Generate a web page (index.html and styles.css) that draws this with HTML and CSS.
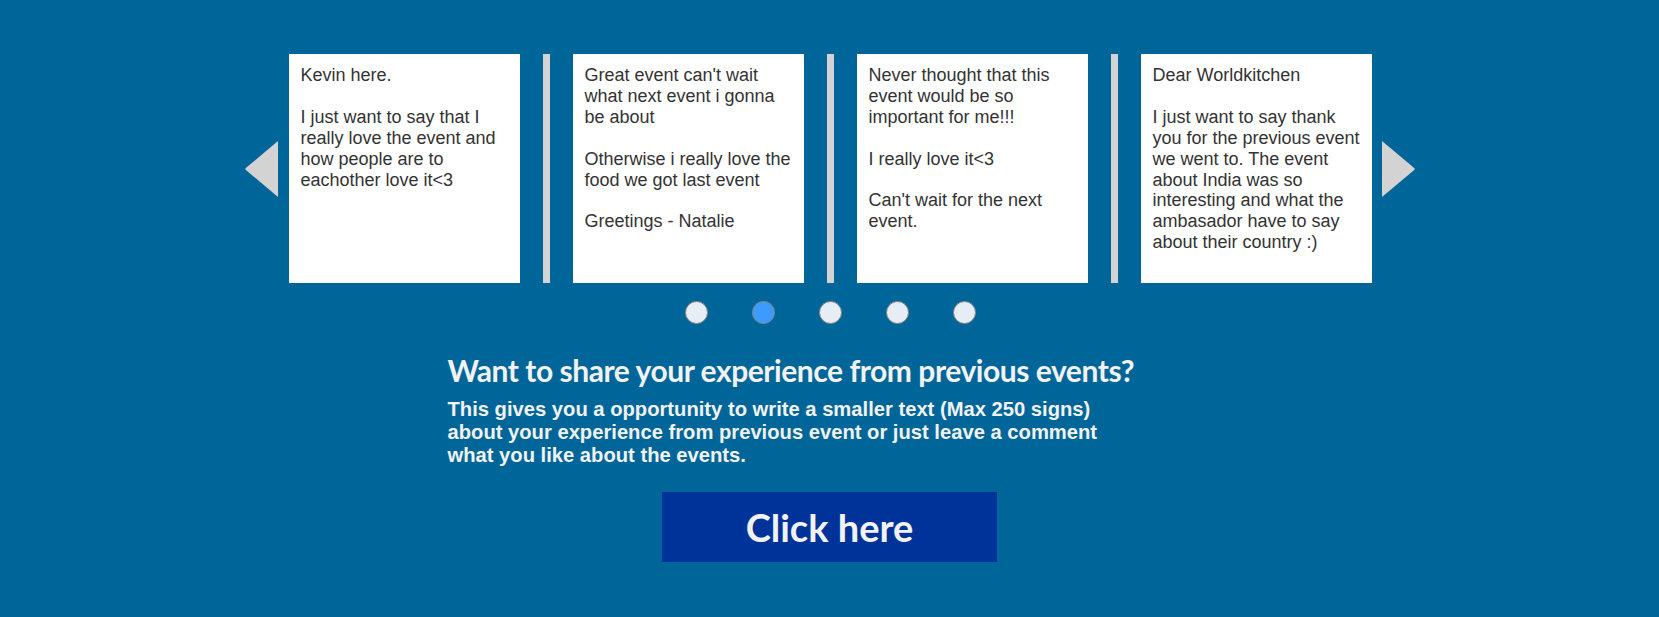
FILE: index.html
```html
<!DOCTYPE html>
<html lang="en">
<head>
<meta charset="utf-8">
<title>Worldkitchen - Reviews</title>
<link rel="stylesheet" href="styles.css">
</head>
<body>
<main class="page">
  <section class="carousel">
    <button class="arrow arrow-prev" aria-label="Previous">
      <svg width="33" height="56" viewBox="0 0 33 56"><polygon points="33,0 33,56 2,30 0,28 2,26" fill="#d3d3d3"/></svg>
    </button>
    <div class="track">
      <div class="card">Kevin here.<br><br>I just want to say that I really love the event and how people are to eachother love it&lt;3</div>
      <div class="sep"></div>
      <div class="card">Great event can't wait what next event i gonna be about<br><br>Otherwise i really love the food we got last event<br><br>Greetings - Natalie</div>
      <div class="sep"></div>
      <div class="card">Never thought that this event would be so important for me!!!<br><br>I really love it&lt;3<br><br>Can't wait for the next event.</div>
      <div class="sep"></div>
      <div class="card">Dear Worldkitchen<br><br>I just want to say thank you for the previous event we went to. The event about India was so interesting and what the ambasador have to say about their country :)</div>
    </div>
    <button class="arrow arrow-next" aria-label="Next">
      <svg width="33" height="56" viewBox="0 0 33 56"><polygon points="0,0 0,56 31,30 33,28 31,26" fill="#d3d3d3"/></svg>
    </button>
  </section>

  <div class="dots">
    <span class="dot"></span>
    <span class="dot active"></span>
    <span class="dot"></span>
    <span class="dot"></span>
    <span class="dot"></span>
  </div>

  <section class="share">
    <div class="share-inner">
      <h2 class="share-title">Want to share your experience from previous events?</h2>
      <p class="share-text">This gives you a opportunity to write a smaller text (Max 250 signs) about your experience from previous event or just leave a comment what you like about the events.</p>
    </div>
  </section>

  <div class="cta">
    <a class="cta-button" href="#">Click here</a>
  </div>
</main>
</body>
</html>
```

FILE: styles.css
```css
html, body {
  margin: 0;
  padding: 0;
}
body {
  background: #006699;
  font-family: "Liberation Sans", Arial, sans-serif;
  height: 617px;
  overflow: hidden;
}
.page {
  display: flex;
  flex-direction: column;
  align-items: center;
  padding-top: 54px;
}
.carousel {
  display: flex;
  align-items: center;
}
.arrow {
  display: flex;
  width: 33px;
  height: 56px;
  padding: 0;
  border: 0;
  background: none;
  cursor: pointer;
}
.arrow-prev { margin-right: 11px; }
.arrow-next { margin-left: 10px; }
.track {
  display: flex;
  gap: 23px;
}
.card {
  width: 231px;
  height: 229px;
  box-sizing: border-box;
  padding: 11px 10px 9px 12px;
  background: #fff;
  color: #333;
  font-size: 18px;
  line-height: 20.9px;
}
.sep {
  width: 7px;
  height: 229px;
  background: #d3d3d3;
}
.dots {
  display: flex;
  gap: 44px;
  margin-top: 18px;
  margin-left: 2px;
}
.dot {
  width: 21px;
  height: 21px;
  border-radius: 50%;
  background: #e6edf4;
  border: 1px solid #858585;
}
.dot.active {
  background: #3d9bff;
}
.share {
  width: 764px;
  margin-top: 28px;
}
.share-inner {
  width: 688px;
}
.share-title {
  margin: 0;
  font-family: Lato, "Open Sans", sans-serif;
  font-weight: 700;
  font-size: 30px;
  line-height: 36px;
  letter-spacing: -0.45px;
  color: #f2f2f2;
  white-space: nowrap;
}
.share-text {
  margin: 10px 0 0;
  font-weight: 700;
  font-size: 20.2px;
  line-height: 23px;
  color: #f2f2f2;
}
.cta {
  margin-top: 25px;
}
.cta-button {
  display: flex;
  align-items: center;
  justify-content: center;
  width: 335px;
  height: 70px;
  background: #003399;
  color: #f2f2f2;
  text-decoration: none;
  font-family: Lato, "Open Sans", sans-serif;
  font-weight: 700;
  font-size: 38px;
}
```
